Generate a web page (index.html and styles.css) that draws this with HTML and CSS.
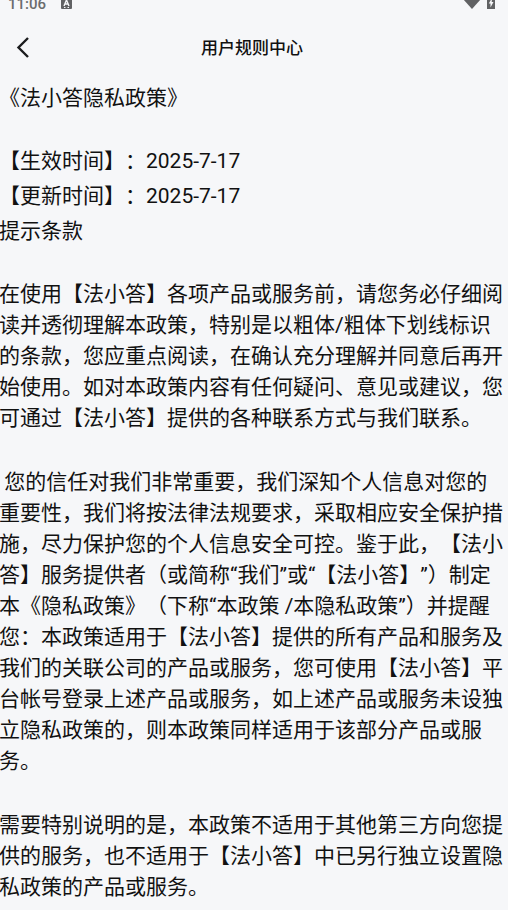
FILE: index.html
```html
<!DOCTYPE html>
<html lang="zh-CN">

<head>
    <meta charset="UTF-8">
    <meta name="viewport" content="width=device-width, initial-scale=1.0">
    <title>用户规则中心</title>
    <link rel="stylesheet" href="styles.css">
</head>

<body>

    <!-- Status bar -->
    <div class="status-bar">
        <span class="time">11:06</span>
        <svg class="app-icon" width="11" height="12" viewBox="0 0 11 12">
            <rect width="11" height="12" rx="1" fill="#616264"/>
            <path d="M3 9 L5.5 3 L8 9 M4 7 H7" fill="none" stroke="#f6f7f9" stroke-width="1.4"/>
            <path d="M3 10.5 H4.5 M6.5 10.5 H8" stroke="#f6f7f9" stroke-width="1"/>
        </svg>
        <svg class="wifi-icon" width="18" height="14" viewBox="0 0 18 14">
            <path d="M0 4 Q9 -3 18 4 L9 14 Z" fill="#616264"/>
        </svg>
        <svg class="battery-icon" width="8" height="14" viewBox="0 0 8 14">
            <path d="M0 2 H2 V0 H6 V2 H8 V14 H0 Z" fill="#616264"/>
            <path d="M5 3 L1.8 8.5 H3.5 V12.5 L6.5 7 H4.7 Z" fill="#f6f7f9"/>
        </svg>
    </div>

    <!-- Title bar -->
    <header class="nav-bar">
        <button class="back" type="button" aria-label="返回">
            <svg width="14" height="22" viewBox="0 0 14 22">
                <path d="M12 1 L2.5 10.5 L12 20" fill="none" stroke="#1b1c1e" stroke-width="2.4"/>
            </svg>
        </button>
        <h1>用户规则中心</h1>
    </header>

    <!-- Policy text -->
    <main class="policy">
        <h2>《法小答隐私政策》</h2>

        <div class="dates">
            <p>【生效时间】：2025-7-17</p>
            <p>【更新时间】：2025-7-17</p>
            <p>提示条款</p>
        </div>

        <p>在使用【法小答】各项产品或服务前，请您务必仔细阅读并透彻理解本政策，特别是以粗体/粗体下划线标识的条款，您应重点阅读，在确认充分理解并同意后再开始使用。如对本政策内容有任何疑问、意见或建议，您可通过【法小答】提供的各种联系方式与我们联系。</p>

        <p>&nbsp;您的信任对我们非常重要，我们深知个人信息对您的重要性，我们将按法律法规要求，采取相应安全保护措施，尽力保护您的个人信息安全可控。鉴于此，【法小答】服务提供者（或简称“我们”或“【法小答】”）制定本《隐私政策》（下称“本政策 /本隐私政策”）并提醒您：本政策适用于【法小答】提供的所有产品和服务及我们的关联公司的产品或服务，您可使用【法小答】平台帐号登录上述产品或服务，如上述产品或服务未设独立隐私政策的，则本政策同样适用于该部分产品或服务。</p>

        <p>需要特别说明的是，本政策不适用于其他第三方向您提供的服务，也不适用于【法小答】中已另行独立设置隐私政策的产品或服务。</p>
    </main>

</body>

</html>
```

FILE: styles.css
```css
* {
    box-sizing: border-box;
}

body {
    margin: 0;
    background: #f6f7f9;
    color: #111;
    font-family: Roboto, "Noto Sans CJK SC", sans-serif;
    text-spacing-trim: space-all;
    overflow-x: hidden;
}

h1,
h2,
p {
    margin: 0;
    font-weight: 400;
}

.status-bar {
    display: flex;
    align-items: flex-end;
    height: 12px;
    padding: 0 13px 0 8px;
    overflow: hidden;
    color: #6b6c6e;
}

.status-bar svg {
    flex: none;
    margin-bottom: 3px;
}

.time {
    font-size: 15px;
    font-weight: 500;
    line-height: 15px;
}

.app-icon {
    margin-left: 15px;
}

.wifi-icon {
    margin-left: auto;
}

.battery-icon {
    margin-left: 6px;
}

.nav-bar {
    display: grid;
    grid-template-columns: 48px 1fr 52px;
    align-items: center;
    height: 71px;
}

.back {
    display: flex;
    padding: 0 16px;
    border: 0;
    background: none;
}

.nav-bar h1 {
    font-size: 17px;
    font-weight: 500;
    line-height: 24px;
    text-align: center;
}

.policy {
    margin-left: -1px;
    padding-right: 1px;
    font-size: 21px;
    line-height: 31px;
}

.policy > * {
    margin-bottom: 33px;
}

.policy h2 {
    margin-bottom: 30px;
    font-size: 21px;
}

.policy .dates {
    margin-bottom: 30px;
    line-height: 35px;
}
```
